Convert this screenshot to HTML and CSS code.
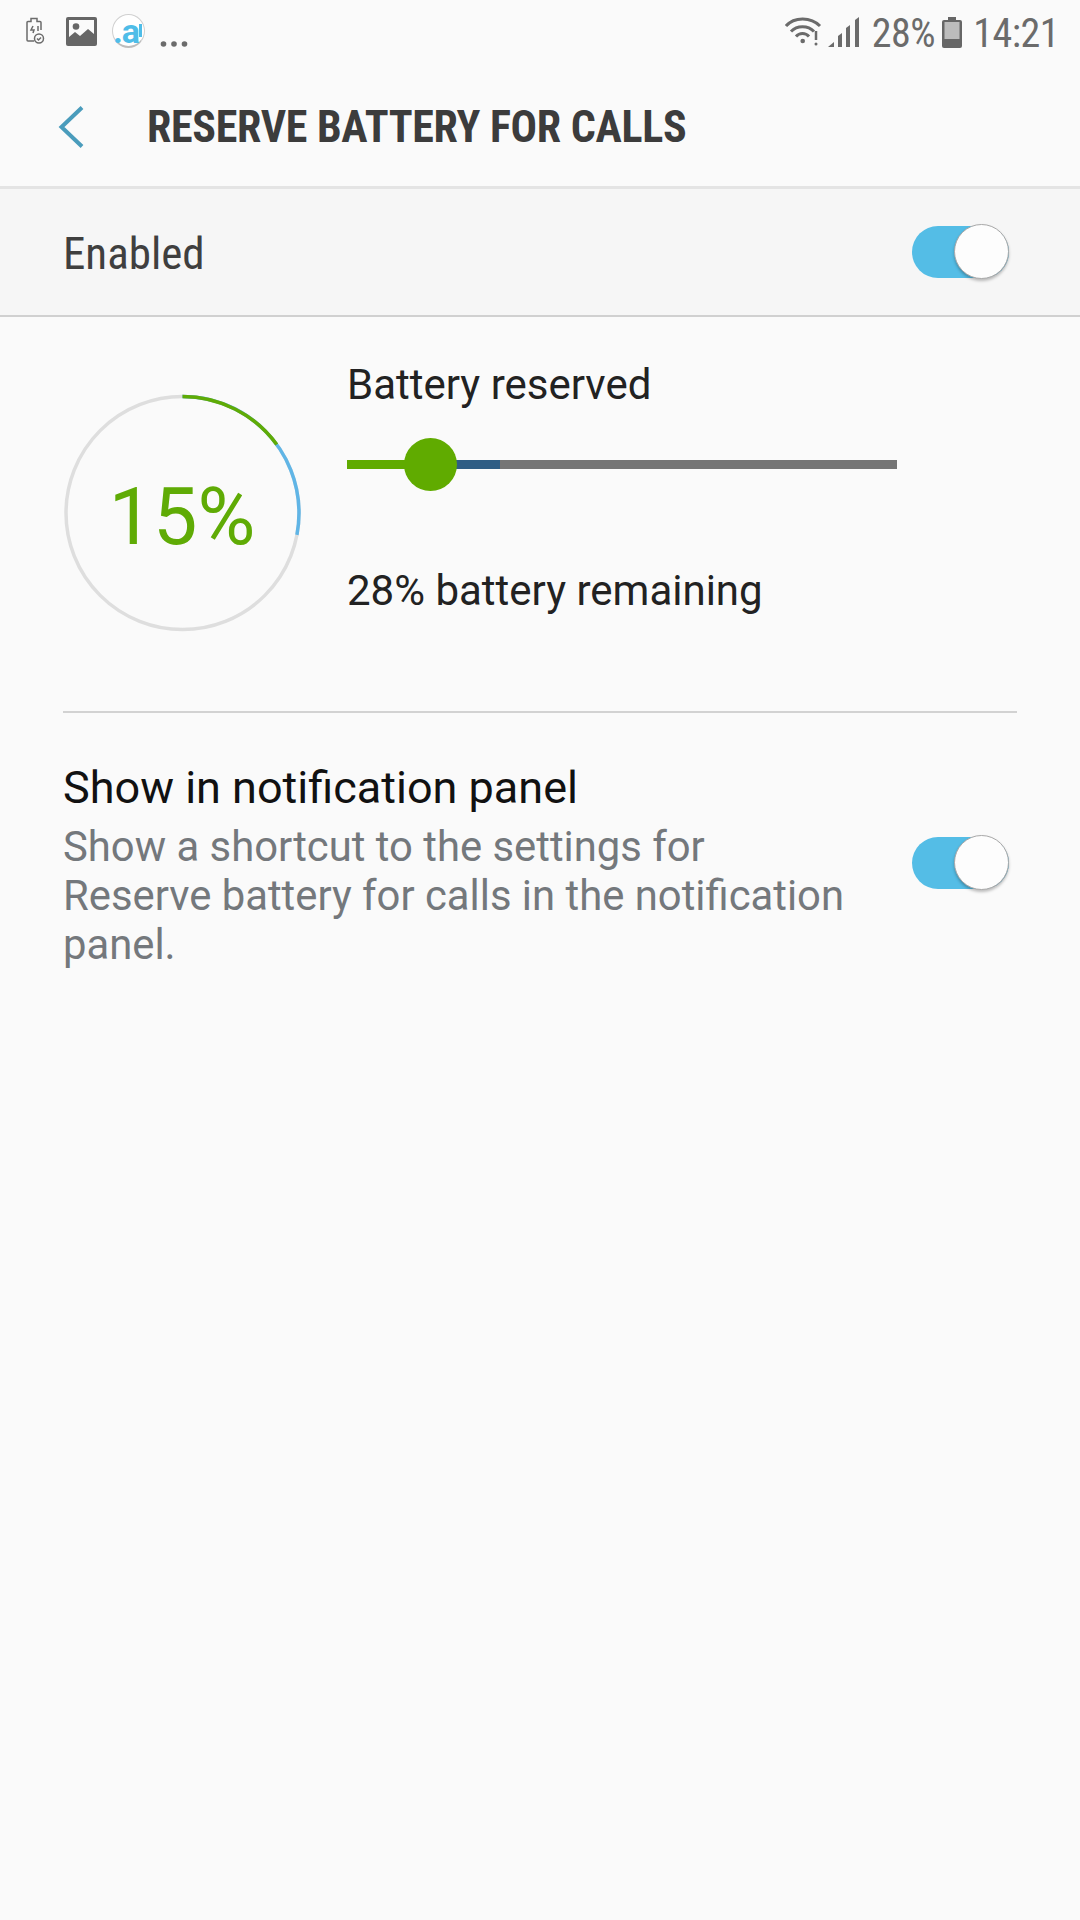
FILE: index.html
```html
<!DOCTYPE html>
<html lang="en">
<head>
    <meta charset="UTF-8">
    <meta name="viewport" content="width=device-width, initial-scale=1.0">
    <title>Reserve battery for calls</title>
    <link rel="stylesheet" href="styles.css">
</head>
<body>
    <div class="status-bar">
        <div class="status-left">
            <svg class="icon-charge" width="20" height="28" viewBox="0 0 20 28" fill="none" stroke="#6b6b6b" stroke-width="1.5">
                <path d="M9 24H3a1 1 0 0 1-1-1V5.500a1 1 0 0 1 1-1h3V1.500h6v3h3a1 1 0 0 1 1 1V13"/>
                <path d="M8 9l-2 4h3l-1 3M13 9v5"/>
                <circle cx="14" cy="21.500" r="4.500"/>
                <path d="M12 21.500l1.500 1.500 2.500-2.500"/>
            </svg>
            <svg class="icon-image" width="31" height="29" viewBox="0 0 31 29">
                <rect width="31" height="29" rx="2" fill="#666"/>
                <rect x="3" y="3" width="25" height="20" fill="#fafafa"/>
                <circle cx="10" cy="9.500" r="3.300" fill="#666"/>
                <path d="M3 23v-3l6-5 5 4 8-7 6 5v6z" fill="#666"/>
            </svg>
            <div class="icon-app"><span>.a</span></div>
            <svg class="icon-more" width="28" height="8" viewBox="0 0 28 8" fill="#6b6b6b">
                <circle cx="3.500" cy="4" r="2.800"/>
                <circle cx="14" cy="4" r="2.800"/>
                <circle cx="24.500" cy="4" r="2.800"/>
            </svg>
        </div>
        <div class="status-right">
            <svg width="37" height="30" viewBox="0 0 37 30" fill="none" stroke="#6b6b6b" stroke-width="3">
                <path d="M1 9C9 -0.500 26 -0.500 35 9"/>
                <path d="M6 14.500C12 8 23 8 29 14.500"/>
                <path d="M11 19.500C14.500 15.500 20.500 15.500 24 19.500"/>
                <circle cx="17.700" cy="24" r="2.300" fill="#6b6b6b" stroke="none"/>
                <path d="M31 14v9" stroke-width="2.500"/>
                <circle cx="31" cy="27" r="1.500" fill="#6b6b6b" stroke="none"/>
            </svg>
            <svg class="icon-signal" width="31" height="30" viewBox="0 0 31 30" fill="#6b6b6b">
                <path d="M0 30l6-5v5z"/>
                <path d="M10 19l4-3v14h-4z"/>
                <path d="M18 11l4-3v22h-4z"/>
                <path d="M27 3l4-3v30h-4z"/>
            </svg>
            <span class="status-text status-pct">28%</span>
            <svg class="icon-battery" width="20" height="31" viewBox="0 0 20 31">
                <rect x="6" y="0" width="8" height="3" fill="#666"/>
                <rect x="0" y="3" width="20" height="28" rx="2" fill="#666"/>
                <rect x="2.500" y="5" width="15" height="17" fill="#bcbcbc"/>
            </svg>
            <span class="status-text status-time">14:21</span>
        </div>
    </div>

    <div class="app-header">
        <svg class="back-icon" width="26" height="42" viewBox="0 0 26 42" fill="none" stroke="#4a9cbc" stroke-width="4">
            <path d="M24 1.500L3.500 21 24 40.500"/>
        </svg>
        <h1 class="page-title">RESERVE BATTERY FOR CALLS</h1>
    </div>

    <div class="enabled-row">
        <span class="enabled-label">Enabled</span>
        <div class="toggle"><div class="toggle-knob"></div></div>
    </div>

    <div class="battery-section">
        <div class="gauge">
            <svg width="240" height="240" viewBox="0 0 240 240" fill="none" stroke-width="3.500">
                <circle cx="119.500" cy="120" r="116.500" stroke="#dedede"/>
                <circle class="gauge-arc" cx="119.500" cy="120" r="116.500" pathLength="100" stroke="#60b5e6" stroke-dasharray="28 100"/>
                <circle class="gauge-arc" cx="119.500" cy="120" r="116.500" pathLength="100" stroke="#5fab05" stroke-dasharray="15 100"/>
            </svg>
            <div class="gauge-value">15%</div>
        </div>
        <div class="battery-info">
            <div class="battery-title">Battery reserved</div>
            <div class="slider">
                <div class="slider-remaining"></div>
                <div class="slider-reserved"></div>
                <div class="slider-knob"></div>
            </div>
            <div class="battery-title">28% battery remaining</div>
        </div>
    </div>

    <div class="divider"></div>

    <div class="panel-row">
        <div class="panel-text">
            <div class="panel-title">Show in notification panel</div>
            <div class="panel-desc">Show a shortcut to the settings for<br>Reserve battery for calls in the notification<br>panel.</div>
        </div>
        <div class="toggle panel-toggle"><div class="toggle-knob"></div></div>
    </div>
</body>
</html>
```

FILE: styles.css
```css
body {
    margin: 0;
    width: 1080px;
    height: 1920px;
    overflow: hidden;
    background-color: #fafafa;
    font-family: Roboto, "Liberation Sans", sans-serif;
    color: #222;
}
.status-bar {
    height: 62px;
    display: flex;
    justify-content: space-between;
    align-items: center;
    padding: 0 21px 0 25px;
}
.status-left, .status-right {
    display: flex;
    align-items: center;
}
.status-right {
    padding-top: 2px;
}
.icon-image {
    margin-left: 21px;
}
.icon-app {
    position: relative;
    width: 33px;
    height: 34px;
    margin-left: 15px;
    box-sizing: border-box;
    border-radius: 50%;
    border: 1px solid #d0d0d0;
    border-bottom: 2px solid #bdbdbd;
    display: flex;
    align-items: center;
    background: #fff;
}
.icon-app::after {
    content: "";
    position: absolute;
    right: 2px;
    top: 9px;
    width: 3px;
    height: 13px;
    background: #4fbde8;
}
.icon-app span {
    color: #4fbde8;
    font-size: 34px;
    font-weight: bold;
    line-height: 30px;
    letter-spacing: -1px;
    white-space: nowrap;
}
.icon-more {
    margin: 25px 0 0 15px;
}
.status-text {
    color: #6b6b6b;
    font-size: 40px;
    line-height: 44px;
    font-stretch: 75%;
    letter-spacing: -0.5px;
    padding-top: 4px;
}
.icon-signal {
    margin-left: 6px;
}
.status-pct {
    margin-left: 13px;
}
.icon-battery {
    margin-left: 7px;
}
.status-time {
    margin-left: 11px;
}
.app-header {
    height: 127px;
    display: flex;
    align-items: center;
    border-bottom: 3px solid #e4e4e4;
    box-sizing: border-box;
    padding: 5px 0 0 58px;
}
.page-title {
    margin: 0 0 0 63px;
    font-size: 44px;
    font-weight: bold;
    font-stretch: 75%;
    letter-spacing: -0.3px;
    color: #3c3c3c;
    white-space: nowrap;
}
.enabled-row {
    height: 128px;
    box-sizing: border-box;
    display: flex;
    justify-content: space-between;
    align-items: center;
    padding: 0 71px 0 63px;
    background: #f6f6f6;
    border-bottom: 2px solid #d0d0d0;
}
.enabled-label {
    padding-top: 2px;
    font-size: 45px;
    font-stretch: 75%;
    color: #3f3f3f;
}
.toggle {
    position: relative;
    width: 97px;
    height: 52px;
    border-radius: 26px;
    background: #54bde6;
    flex-shrink: 0;
}
.panel-toggle {
    margin-bottom: 2px;
}
.toggle-knob {
    position: absolute;
    top: -2px;
    right: 0;
    width: 53px;
    height: 53px;
    border-radius: 50%;
    background: #fdfdfd;
    border: 1px solid #a9a9a9;
    box-shadow: 0 2px 3px rgba(0,0,0,0.25);
}
.battery-section {
    display: flex;
    padding: 0 63px;
    height: 394px;
}
.gauge {
    position: relative;
    width: 240px;
    height: 240px;
    margin-top: 76px;
}
.gauge-arc {
    transform: rotate(-90deg);
    transform-origin: 119.500px 120px;
}
.gauge-value {
    position: absolute;
    left: 0;
    right: 0;
    top: 0;
    bottom: 0;
    padding: 7px 2px 0 0;
    display: flex;
    justify-content: center;
    align-items: center;
    font-size: 79px;
    color: #5fab05;
}
.battery-info {
    margin-left: 44px;
    padding-top: 43px;
}
.battery-title {
    font-size: 42px;
    line-height: 50px;
    color: #222;
    white-space: nowrap;
}
.slider {
    position: relative;
    width: 550px;
    height: 9px;
    margin: 50px 0 97px;
    background: #757575;
}
.slider-remaining {
    position: absolute;
    left: 0;
    top: 0;
    width: 153px;
    height: 9px;
    background: #2f5d84;
}
.slider-reserved {
    position: absolute;
    left: 0;
    top: 0;
    width: 83px;
    height: 9px;
    background: #60ab00;
}
.slider-knob {
    position: absolute;
    left: 57px;
    top: -22px;
    width: 53px;
    height: 53px;
    border-radius: 50%;
    background: #60ab00;
}
.divider {
    height: 2px;
    margin: 0 63px;
    background: #d2d2d2;
}
.panel-row {
    display: flex;
    justify-content: space-between;
    align-items: center;
    padding: 45px 71px 0 63px;
}
.panel-title {
    font-size: 45px;
    line-height: 60px;
    margin-bottom: 4px;
    color: #111;
}
.panel-desc {
    font-size: 41.8px;
    line-height: 49px;
    color: #74787c;
    white-space: nowrap;
}
```
